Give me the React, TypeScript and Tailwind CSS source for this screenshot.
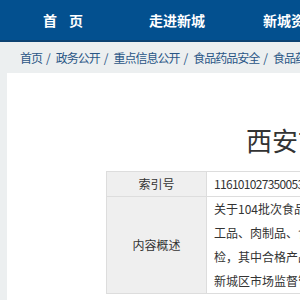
import React from 'react';

const NAV_ITEMS = ['首页', '走进新城', '新城资讯', '政务公开'];

const CRUMBS = ['首页', '政务公开', '重点信息公开', '食品药品安全', '食品药品抽检'];

const SUMMARY_LINES = [
  '关于104批次食品安全监督抽检情况的通告：近期，西安市新城区市场监督管理局组织抽检糖果制品、方便食品、粮食加',
  '工品、肉制品、食用农产品、餐饮食品、饮料、调味品等14类食品104批次样品，委托有资质的检验机构依法进行了抽',
  '检，其中合格产品104批次，不合格产品0批次。根据《中华人民共和国食品安全法》及其实施条例的规定，现将抽检结果',
  '新城区市场监督管理局将持续加强食品安全监督抽检工作，特此通告。',
];

const App: React.FC = () => {
  return (
    <div
      className="w-[300px] h-[300px] overflow-hidden bg-[#eceff0]"
      style={{ fontFamily: '"Noto Sans CJK SC", "Noto Sans", sans-serif' }}
    >
      {/* top navigation */}
      <div className="h-[42px] bg-[#03508f] border-b-2 border-[#0c4272] flex pl-[6px] pt-[1px] whitespace-nowrap">
        {NAV_ITEMS.map((item, i) => (
          <div
            key={item}
            className="w-[114px] shrink-0 flex items-center justify-center text-white font-bold text-[14px]"
          >
            {i === 0 ? (
              <span className="flex gap-[12px]">
                <span>首</span>
                <span>页</span>
              </span>
            ) : (
              item
            )}
          </div>
        ))}
      </div>

      {/* breadcrumb */}
      <div className="h-[31px] flex items-center pl-[20px] text-[12px] tracking-[-1px] text-[#2a5686] whitespace-nowrap">
        {CRUMBS.map((c, i) => (
          <React.Fragment key={c}>
            {i > 0 && <span className="ml-[4px] mr-[6px]">/</span>}
            <span>{c}</span>
          </React.Fragment>
        ))}
      </div>

      {/* content panel */}
      <div className="ml-[7px] w-[1200px] h-[300px] bg-white">
        <div className="pt-[54px] pl-[239px] text-[26px] leading-[26px] text-[#333] whitespace-nowrap">
          西安市新城区市场监督管理局关于104批次食品安全监督抽检情况的通告
        </div>

        <table className="mt-[18px] ml-[99px] border-collapse text-[12px] text-[#333]">
          <tbody>
            <tr>
              <td className="w-[100px] border border-[#dddddd] bg-[#efefef] text-center leading-[24px]">
                索引号
              </td>
              <td className="w-[900px] border border-[#dddddd] pl-[7px] leading-[24px] tracking-[-0.7px]">
                116101027350053/2023-00123
              </td>
            </tr>
            <tr>
              <td className="border border-[#dddddd] bg-[#efefef] text-center">内容概述</td>
              <td className="border border-[#dddddd] pl-[7px] leading-[24px]">
                {SUMMARY_LINES.map((line) => (
                  <div key={line} className="whitespace-nowrap overflow-hidden">
                    {line}
                  </div>
                ))}
              </td>
            </tr>
          </tbody>
        </table>
      </div>
    </div>
  );
};

export default App;
